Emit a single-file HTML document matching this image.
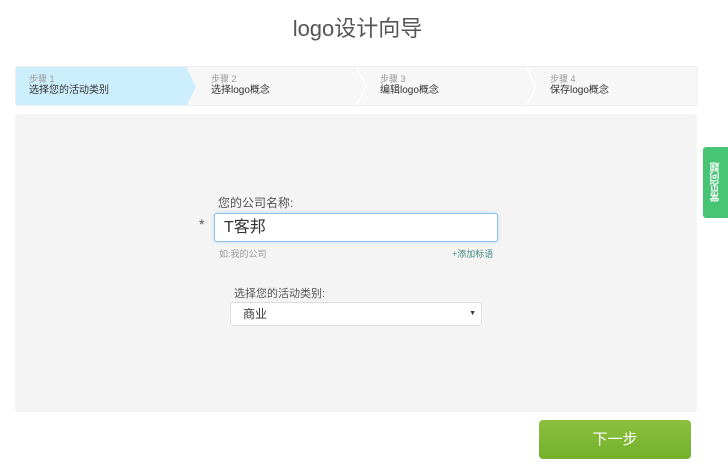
<!DOCTYPE html>
<html><head><meta charset="utf-8"><style>
*{margin:0;padding:0;box-sizing:border-box}
body{width:728px;height:474px;background:#fff;font-family:"Liberation Sans","Noto Sans CJK SC",sans-serif;position:relative;overflow:hidden;color:#333}
.a{position:absolute}
h1{position:absolute;top:11px;left:0;width:715px;text-align:center;font-weight:normal;font-size:22px;color:#555}
.steps{left:15px;top:66px;width:683px;height:40px;background:#f7f7f7;border:1px solid #eee;border-radius:3px;overflow:hidden}
.st{position:absolute;top:7px;font-size:9px;color:#999;line-height:11px}
.st b{display:block;font-weight:normal;font-size:10px;color:#333}
.panel{left:15px;top:114px;width:682px;height:298px;background:#f4f4f4;border-radius:3px}
</style></head><body>
<h1>logo设计向导</h1>
<div class="a steps">
<svg class="a" style="left:0;top:0" width="683" height="40">
<polygon points="0,0 170,0 180,20 170,40 0,40" fill="#cdeefd"/>
<polyline points="340,0 350,20 340,40" fill="none" stroke="#fff" stroke-width="1.5"/>
<polyline points="510,0 520,20 510,40" fill="none" stroke="#fff" stroke-width="1.5"/>
</svg>
<div class="st" style="left:13px">步骤 1<b>选择您的活动类别</b></div>
<div class="st" style="left:195px">步骤 2<b>选择logo概念</b></div>
<div class="st" style="left:364px">步骤 3<b>编辑logo概念</b></div>
<div class="st" style="left:534px">步骤 4<b>保存logo概念</b></div>
</div>
<div class="a panel"></div>
<div class="a" style="left:218px;top:194px;font-size:12px;color:#555">您的公司名称:</div>
<div class="a" style="left:199px;top:216px;font-size:14px;color:#555">*</div>
<div class="a" style="left:214px;top:213px;width:284px;height:29px;background:#fff;border:1px solid #8ec3ea;border-radius:3px;box-shadow:0 0 4px #b8dcf5;font-size:16px;line-height:27px;padding-left:9px;color:#333">T客邦</div>
<div class="a" style="left:219px;top:247px;font-size:9px;color:#999">如:我的公司</div>
<div class="a" style="left:452px;top:247px;font-size:9px;color:#4a8a8a">+添加标语</div>
<div class="a" style="left:234px;top:285px;font-size:11px;color:#555">选择您的活动类别:</div>
<div class="a" style="left:230px;top:302px;width:252px;height:24px;background:#fff;border:1px solid #ddd;border-radius:3px;font-size:12px;line-height:22px;padding-left:12px;color:#333">商业<span style="position:absolute;right:5px;top:0;font-size:7px;color:#333">▼</span></div>
<div class="a" style="left:703px;top:147px;width:27px;height:71px;background:#47c474;border-radius:3px;color:#fff;font-size:10px;font-weight:bold;writing-mode:vertical-rl;transform:rotate(180deg);text-align:center;line-height:27px">常见问题</div>
<div class="a" style="left:539px;top:420px;width:152px;height:39px;background:linear-gradient(#8bc13f,#74b02a);border-radius:4px;color:#fff;font-size:15px;text-align:center;line-height:39px">下一步</div>
</body></html>
